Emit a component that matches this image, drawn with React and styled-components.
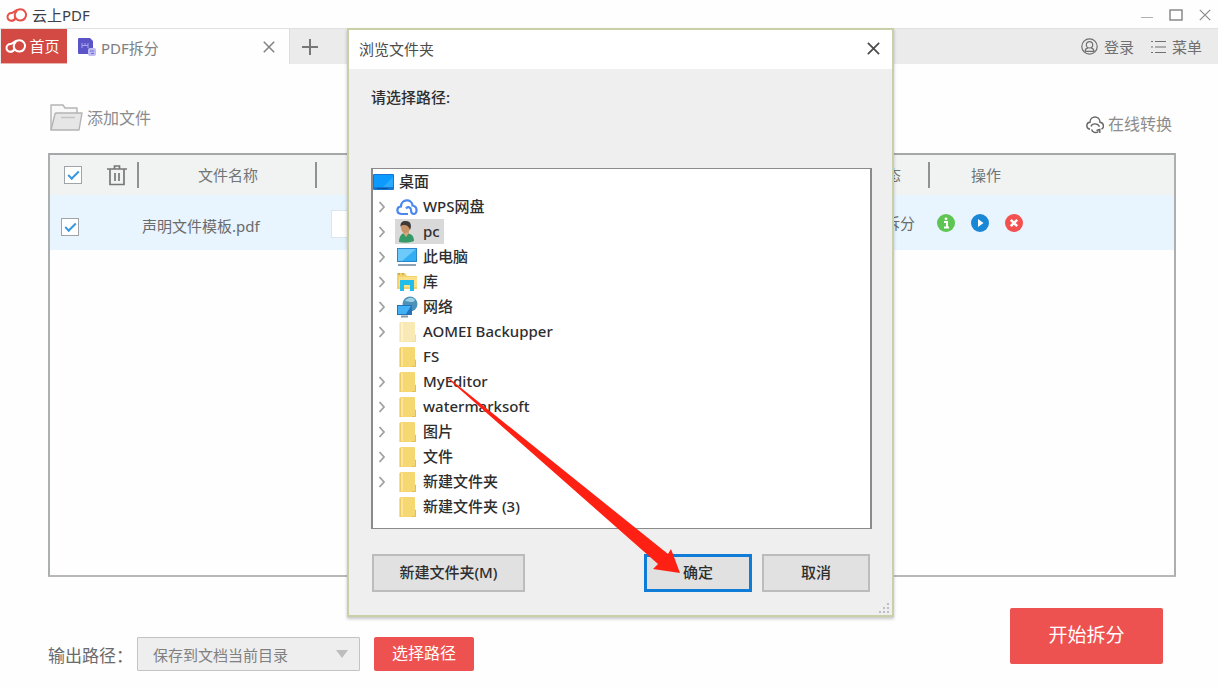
import React from "react"
import styled, { createGlobalStyle } from "styled-components"

const GlobalStyle = createGlobalStyle`
*{
    box-sizing: border-box;
}
body{
    margin: 0;
    background: #fefefe;
    color: #6b6b6b;
    font-family: "Noto Sans", "Noto Sans CJK SC", sans-serif;
    font-size: 15px;
    line-height: 24px;
    overflow: hidden;
}
button, select, input{
    font: inherit;
    color: inherit;
    margin: 0;
}
button{
    padding: 0;
    border: none;
    background: none;
    cursor: pointer;
}
svg{
    display: block;
    flex: none;
}
`
const Window = styled.div`
position: relative;
min-height: 100vh;
display: flex;
flex-direction: column;
`
const TitleBar = styled.header`
height: 28px;
padding: 2px 7px 0 6px;
display: flex;
align-items: center;
justify-content: space-between;
`
const Brand = styled.div`
display: flex;
align-items: center;
gap: 4px;
color: #3c4048;
`
const WindowButtons = styled.div`
display: flex;
align-items: center;
gap: 16px;
color: #8a8a8a;
`
const TabBar = styled.nav`
height: 36px;
border-top: 1px solid #e0e0e0;
padding-left: 1px;
display: flex;
background: #ebebeb;
`
const HomeTab = styled.button`
width: 66px;
padding-right: 3px;
display: flex;
align-items: center;
justify-content: center;
gap: 2px;
background: #d24a43;
color: #fff;
border-bottom: 1px solid #eab5b1;
`
const FileTab = styled.div`
width: 223px;
padding: 0 14px 0 11px;
display: flex;
align-items: center;
gap: 5px;
background: #fefefe;
border-right: 1px solid #dedede;
color: #808080;
span{
    flex: 1;
    padding-top: 3px;
}
`
const AddTab = styled.button`
padding-left: 12px;
color: #777;
`
const Account = styled.div`
margin-left: auto;
padding-right: 16px;
display: flex;
gap: 17px;
`
const TextButton = styled.button`
display: flex;
align-items: center;
gap: ${p => p.$pale ? "4px" : "6px"};
color: ${p => p.$pale ? "#8c8c8c" : "#707070"};
font-size: ${p => p.$pale ? "16px" : "15px"};
`
const Toolbar = styled.div`
height: 89px;
padding: 40px 46px 17px 50px;
display: flex;
justify-content: space-between;
`
const AddFile = styled(TextButton)`
align-self: flex-start;
`
const Convert = styled(TextButton)`
align-self: flex-end;
`
const ListBox = styled.main`
flex: 1;
margin: 0 42px 0 48px;
border: 2px solid #aaadad;
border-color: #a5a8a8 #acafaf #b8b8b8;
`
const Table = styled.table`
width: 100%;
border-collapse: collapse;
table-layout: fixed;
`
const HeadRow = styled.tr`
height: 40px;
background: #f1f3f3;
`
const FileRow = styled.tr`
height: 55px;
background: #e8f4fe;
`
const HeadCell = styled.th`
width: ${p => p.$w || "auto"};
padding: 0 ${p => p.$padRight || 0} 0 ${p => p.$padLeft || 0};
font-weight: 400;
text-align: ${p => p.$align || "center"};
color: #707576;
background: ${p => p.$last ? "none" : "linear-gradient(#8e9292, #8e9292) right center / 2px 26px no-repeat"};
`
const Cell = styled.td`
padding: ${p => p.$pad || "8px 0 0"};
text-align: ${p => p.$align || "left"};
white-space: nowrap;
`
const Tools = styled.div`
display: flex;
align-items: center;
gap: ${p => p.$gap};
`
const Check = styled.input`
appearance: none;
width: 18px;
height: 18px;
border: 1px solid #9fa4a8;
background: #fff;
display: grid;
place-items: center;
&:checked::after{
    content: "";
    width: 9px;
    height: 4px;
    border: solid #3a98e0;
    border-width: 0 0 2px 2px;
    transform: translateY(-1px) rotate(-45deg);
}
`
const PageInput = styled.input`
display: block;
width: 100px;
height: 28px;
border: 1px solid #dde6ec;
background: #fff;
padding: 0 8px;
`
const Footer = styled.footer`
height: 111px;
padding: 31px 55px 0 48px;
display: flex;
align-items: flex-start;
justify-content: space-between;
`
const Output = styled.div`
padding-top: 29px;
display: flex;
align-items: center;
label{
    width: 89px;
    padding-top: 3px;
    font-size: 17px;
    white-space: nowrap;
}
`
const SelectBox = styled.div`
position: relative;
margin-right: 14px;
svg{
    position: absolute;
    right: 12px;
    top: 12px;
    pointer-events: none;
}
`
const PathSelect = styled.select`
appearance: none;
width: 223px;
height: 34px;
padding: 1px 30px 0 15px;
border: 1px solid #c3c3c3;
border-radius: 1px;
background: #eee;
color: #808080;
`
const RedButton = styled.button`
width: ${p => p.$big ? "153px" : "100px"};
height: ${p => p.$big ? "56px" : "34px"};
padding-bottom: 2px;
border-radius: 2px;
background: #ee5250;
color: #fff;
font-size: ${p => p.$big ? "19px" : "16px"};
`
const Dialog = styled.section`
position: absolute;
left: 347px;
top: 28px;
width: 547px;
border: 2px solid #c9d0a8;
background: #efefef;
box-shadow: 0 2px 3px rgba(0, 0, 0, 0.22);
color: #2e2e2e;
`
const DialogTitle = styled.div`
height: 39px;
padding: 0 12px 2px 10px;
display: flex;
align-items: center;
justify-content: space-between;
background: #fff;
color: #4c4c4c;
`
const DialogBody = styled.div`
position: relative;
padding: 16px 20px 23px 22px;
`
const Prompt = styled.p`
height: 83px;
margin: 0;
font-weight: 500;
`
const Tree = styled.ul`
height: 361px;
margin: 0;
padding: 0 0 0 5px;
list-style: none;
background: #fff;
border: 1px solid #8b8b8b;
border-width: 1px 2px 1px;
font-weight: 500;
`
const Node = styled.li`
height: 25px;
margin-left: ${p => p.$root ? "-5px" : "0"};
display: flex;
align-items: center;
gap: 9px;
`
const Arrow = styled.span`
width: 8px;
`
const NodeLabel = styled.div`
height: 25px;
padding: 0 4px 0 ${p => p.$root ? "0" : "1px"};
display: flex;
align-items: center;
gap: 5px;
background: ${p => p.$selected ? "#d9d9d9" : "none"};
span{
    padding-bottom: 1px;
}
`
const DialogButtons = styled.div`
padding: 25px 2px 0 1px;
display: flex;
gap: 10px;
`
const DialogButton = styled.button`
width: ${p => p.$wide ? "153px" : "108px"};
height: 38px;
margin-right: ${p => p.$wide ? "auto" : "0"};
padding-bottom: 2px;
border: ${p => p.$main ? "3px solid #0f7cd8" : "2px solid #bcbcbc"};
background: #e1e1e1;
font-weight: 500;
`
const Grip = styled.svg`
position: absolute;
right: 2px;
bottom: 1px;
`
const Pointer = styled.svg`
position: absolute;
left: 440px;
top: 370px;
pointer-events: none;
`

const Logo = ({ color }) => (
    <svg width="22" height="14" viewBox="0 0 22 14" fill="none" stroke={color} strokeWidth="2">
        <path d="M9.300 8.800A3.900 3.900 0 1 1 5.400 5C8 5 8.500 1.500 14 1.200A5.700 5.700 0 1 1 9.500 10C8.200 7.500 9 4.500 11 2.500" />
        <path d="M5.400 12.700C8 12.700 9.500 11.500 9.300 8.800" />
    </svg>
)
const Cross = ({ size = 12, width = 1.5 }) => (
    <svg width={size} height={size} viewBox="0 0 12 12" stroke="currentColor" strokeWidth={width}>
        <path d="M.8.8l10.4 10.4M11.2.8L.8 11.2" />
    </svg>
)
const PdfIcon = () => (
    <svg width="18" height="18" viewBox="0 0 18 18">
        <path d="M0 1Q0 0 1 0H12L15 3V16H1Q0 16 0 15Z" fill="#5b54c8" />
        <path d="M4 5V10M4 7.5H10M10 5V10M7 5V7" stroke="#aaa5ee" fill="none" />
        <rect x="10" y="10" width="8" height="8" rx="2" fill="#bdb9f2" />
        <path d="M12 13H16M13 15.5H16" stroke="#7069d8" />
    </svg>
)
const OpenFolder = () => (
    <svg width="33" height="28" viewBox="0 0 33 28" stroke="#b4b4b4" strokeWidth="1.4" strokeLinejoin="round">
        <path d="M1 26V1H13L15 4H27V9" fill="#f8f8f8" />
        <path d="M5 10Q5 9 6 9H32L29 26H1Z" fill="#e6e6e6" />
        <path d="M11 13.5H25" stroke="#c2c2c2" />
    </svg>
)
const UserIcon = () => (
    <svg width="17" height="17" viewBox="0 0 17 17" fill="none" stroke="currentColor" strokeWidth="1.2">
        <circle cx="8.5" cy="8.5" r="7.7" />
        <circle cx="8.5" cy="6.8" r="3.2" />
        <path d="M4 13.5C4 11 6 10 7 9.8M13 13.5C13 11 11 10 10 9.8M4 13.3H13" />
    </svg>
)
const MenuIcon = () => (
    <svg width="15" height="14" viewBox="0 0 15 14" stroke="currentColor" strokeWidth="1.2">
        <path d="M0 1.5H2M4 1.5H15M0 7H2M4 7H15M0 12.5H2M4 12.5H15" />
    </svg>
)
const ConvertIcon = () => (
    <svg width="18" height="19" viewBox="0 0 18 19" fill="none" stroke="#666" strokeWidth="1.4">
        <path d="M4 14.200C-.5 13.200 0 7.500 4 7.300C4 .2 14 .2 14 7.300C18 7.800 18.500 12.500 15.500 14.200" />
        <path d="M5 11.500C6 8 12 8 13.500 11.800M5.500 14.500C6.500 17.500 10 18.500 12.500 16.500M10.500 15.500L13.800 14.500V18" />
    </svg>
)
const Trash = () => (
    <svg width="20" height="21" viewBox="0 0 20 21" fill="none" stroke="#777" strokeWidth="1.7">
        <path d="M0 4H20M7.500 3.500V1H12.500V3.500M3 4V19.500H17V4M8 8V16M12 8V16" />
    </svg>
)
const Round = ({ color, children }) => (
    <svg width="18" height="18" viewBox="0 0 18 18">
        <circle cx="9" cy="9" r="9" fill={color} />
        {children}
    </svg>
)
const Chevron = () => (
    <svg width="8" height="12" viewBox="0 0 8 12" fill="none" stroke="#a0a0a0" strokeWidth="1.8">
        <path d="M1.500 1L6 6L1.500 11" />
    </svg>
)

const TreeIcon = ({ type }) => {
    if (type === "desktop") {
        return <svg width="21" height="16" viewBox="0 0 21 16">
            <rect width="21" height="16" rx="1" fill="#1677d2" />
            <path d="M1 1H20V13H1Z" fill="#0c9aff" />
            <path d="M10 13L20 3V13Z" fill="#2aaaff" />
            <path d="M4 14.500H15" stroke="#0b529c" />
        </svg>
    }
    if (type === "cloud") {
        return <svg width="22" height="20" viewBox="0 0 22 20" fill="none" stroke="#4b87ee" strokeWidth="2.200">
            <path d="M12 17H6C0 17 0 10 5 9.500C5 1.500 16 1.500 16.500 8.500C22 9.500 21.500 17 17.500 17" />
            <path d="M10 11.500C12 9 15 10.500 15 13C15 15.500 16 17 18 17" />
        </svg>
    }
    if (type === "user") {
        return <svg width="22" height="22" viewBox="0 0 22 22">
            <path d="M3 21C3 15 6 12 9 12C14 12 18 14 18 20C14 22 7 22 3 21Z" fill="#369a68" />
            <path d="M7 12L10 16L13 12V9H7Z" fill="#d8a77a" />
            <ellipse cx="9.500" cy="6.500" rx="4.500" ry="5.500" fill="#c99468" />
            <path d="M4.500 6C4 0 8 0 10 0C15 0 16 5 14 9C13 5 10 3.500 7.500 4C5.500 4 5 5 4.500 6Z" fill="#3f3a38" />
        </svg>
    }
    if (type === "computer") {
        return <svg width="22" height="20" viewBox="0 0 22 20">
            <rect x="1" y="1" width="20" height="14" fill="#2a86c8" />
            <path d="M2 2H20V14H2Z" fill="#33aef2" />
            <path d="M2 2H20L6 14H2Z" fill="#6cc9fa" />
            <path d="M2 18H20" stroke="#8ba1b3" strokeWidth="2" />
        </svg>
    }
    if (type === "library") {
        return <svg width="22" height="20" viewBox="0 0 22 20">
            <path d="M1 1H9L11 4H21V17H1Z" fill="#f3d269" />
            <path d="M3 5H21V15H3Z" fill="#fbe08a" />
            <path d="M4 8H18V19H14V13H8V19H4Z" fill="#22bde8" />
            <path d="M2 2H4M6 2H8" stroke="#a58b43" />
        </svg>
    }
    if (type === "network") {
        return <svg width="22" height="22" viewBox="0 0 22 22">
            <circle cx="14" cy="8" r="7.500" fill="#4d91b9" />
            <path d="M9 5C12 1 17 1 19 4C17 8 13 5 9 5Z" fill="#9bd0e7" />
            <rect x="1" y="9" width="15" height="10" fill="#2374bd" />
            <path d="M2 10H15L10 18H2Z" fill="#42b2f4" />
            <path d="M5 20.500H12" stroke="#8798a7" strokeWidth="2" />
        </svg>
    }
    const pale = type === "pale"
    return <svg width="22" height="22" viewBox="0 0 22 22">
        <path d="M4 2Q4 1 5 1H18Q19 1 19 2V13L20 14V20Q20 21 19 21H4Z" fill={pale ? "#f8e9b5" : "#f6d872"} />
        <path d="M4 2V21M16 20.500H19.500V14" stroke={pale ? "#f3dda0" : "#e5bd51"} fill="none" />
        <path d="M6 2V20" stroke={pale ? "#fdf3d0" : "#fce59a"} strokeWidth="2" />
    </svg>
}

const folders = [
    { name: "桌面", icon: "desktop", root: true },
    { name: "WPS网盘", icon: "cloud", open: true },
    { name: "pc", icon: "user", open: true, selected: true },
    { name: "此电脑", icon: "computer", open: true },
    { name: "库", icon: "library", open: true },
    { name: "网络", icon: "network", open: true },
    { name: "AOMEI Backupper", icon: "pale", open: true },
    { name: "FS", icon: "folder" },
    { name: "MyEditor", icon: "folder", open: true },
    { name: "watermarksoft", icon: "folder", open: true },
    { name: "图片", icon: "folder", open: true },
    { name: "文件", icon: "folder", open: true },
    { name: "新建文件夹", icon: "folder", open: true },
    { name: "新建文件夹 (3)", icon: "folder" },
]

function FileTable() {
    return <Table>
        <thead>
            <HeadRow>
                <HeadCell $w="89px" $padLeft="14px">
                    <Tools $gap="25px">
                        <Check type="checkbox" defaultChecked aria-label="全选" />
                        <button aria-label="删除"><Trash /></button>
                    </Tools>
                </HeadCell>
                <HeadCell $w="178px">文件名称</HeadCell>
                <HeadCell />
                <HeadCell $w="120px" $align="right" $padRight="29px">状态</HeadCell>
                <HeadCell $w="244px" $align="left" $padLeft="41px" $last>操作</HeadCell>
            </HeadRow>
        </thead>
        <tbody>
            <FileRow>
                <Cell $pad="8px 0 0 11px">
                    <Check type="checkbox" defaultChecked aria-label="声明文件模板.pdf" />
                </Cell>
                <Cell $pad="6px 0 0 3px">声明文件模板.pdf</Cell>
                <Cell $pad="2px 0 0 14px">
                    <PageInput aria-label="页码" />
                </Cell>
                <Cell $align="right" $pad="0 15px 0 0">拆分</Cell>
                <Cell $pad="0 0 0 7px">
                    <Tools $gap="16px">
                        <button aria-label="信息">
                            <Round color="#5fc552">
                                <path d="M7 8H10V13M7 13.500H12" stroke="#fff" strokeWidth="2" fill="none" />
                                <circle cx="9" cy="4.800" r="1.400" fill="#fff" />
                            </Round>
                        </button>
                        <button aria-label="开始">
                            <Round color="#1a86d6"><path d="M7 5L12.500 9L7 13Z" fill="#fff" /></Round>
                        </button>
                        <button aria-label="移除">
                            <Round color="#f4504f">
                                <path d="M5.800 5.800L12.200 12.200M12.200 5.800L5.800 12.200" stroke="#fff" strokeWidth="2.600" />
                            </Round>
                        </button>
                    </Tools>
                </Cell>
            </FileRow>
        </tbody>
    </Table>
}

function FolderDialog() {
    return <Dialog role="dialog" aria-label="浏览文件夹">
        <DialogTitle>
            <span>浏览文件夹</span>
            <button aria-label="关闭"><Cross size={13} width={1.6} /></button>
        </DialogTitle>
        <DialogBody>
            <Prompt>请选择路径:</Prompt>
            <Tree>
                {
                    folders.map(i => {
                        return <Node key={i.name} $root={i.root}>
                            {!i.root && <Arrow>{i.open && <Chevron />}</Arrow>}
                            <NodeLabel $root={i.root} $selected={i.selected}>
                                <TreeIcon type={i.icon} />
                                <span>{i.name}</span>
                            </NodeLabel>
                        </Node>
                    })
                }
            </Tree>
            <DialogButtons>
                <DialogButton $wide>新建文件夹(M)</DialogButton>
                <DialogButton $main>确定</DialogButton>
                <DialogButton>取消</DialogButton>
            </DialogButtons>
            <Grip width="12" height="12" viewBox="0 0 12 12" fill="#bdbdc4">
                <path d="M9 1H11V3H9ZM5 5H7V7H5ZM9 5H11V7H9ZM1 9H3V11H1ZM5 9H7V11H5ZM9 9H11V11H9Z" />
            </Grip>
        </DialogBody>
    </Dialog>
}

export default function App() {
    return <Window>
        <GlobalStyle />
        <TitleBar>
            <Brand><Logo color="#e8514a" />云上PDF</Brand>
            <WindowButtons>
                <button aria-label="最小化">
                    <svg width="12" height="12" stroke="#b0b0b0"><path d="M0 8.500H12" /></svg>
                </button>
                <button aria-label="最大化">
                    <svg width="14" height="12" fill="none" stroke="#8a8a8a" strokeWidth="1.500">
                        <rect x="1" y="1" width="12" height="10" />
                    </svg>
                </button>
                <button aria-label="关闭窗口"><Cross width={1.2} /></button>
            </WindowButtons>
        </TitleBar>
        <TabBar>
            <HomeTab><Logo color="#fff" />首页</HomeTab>
            <FileTab>
                <PdfIcon />
                <span>PDF拆分</span>
                <button aria-label="关闭标签"><Cross /></button>
            </FileTab>
            <AddTab aria-label="新建标签">
                <svg width="16" height="16" stroke="currentColor" strokeWidth="2"><path d="M0 8H16M8 0V16" /></svg>
            </AddTab>
            <Account>
                <TextButton><UserIcon />登录</TextButton>
                <TextButton><MenuIcon />菜单</TextButton>
            </Account>
        </TabBar>
        <Toolbar>
            <AddFile $pale><OpenFolder />添加文件</AddFile>
            <Convert $pale><ConvertIcon />在线转换</Convert>
        </Toolbar>
        <ListBox>
            <FileTable />
        </ListBox>
        <Footer>
            <Output>
                <label htmlFor="path">输出路径：</label>
                <SelectBox>
                    <PathSelect id="path">
                        <option>保存到文档当前目录</option>
                    </PathSelect>
                    <svg width="12" height="9"><path d="M0 1H12L6 9Z" fill="#bdbdbd" /></svg>
                </SelectBox>
                <RedButton>选择路径</RedButton>
            </Output>
            <RedButton $big>开始拆分</RedButton>
        </Footer>
        <FolderDialog />
        <Pointer width="245" height="210" viewBox="0 0 245 210">
            <path d="M7 8L10 9L228 184L231 179L240 203L213 199L218 194Z" fill="#ff2014" />
        </Pointer>
    </Window>
}
